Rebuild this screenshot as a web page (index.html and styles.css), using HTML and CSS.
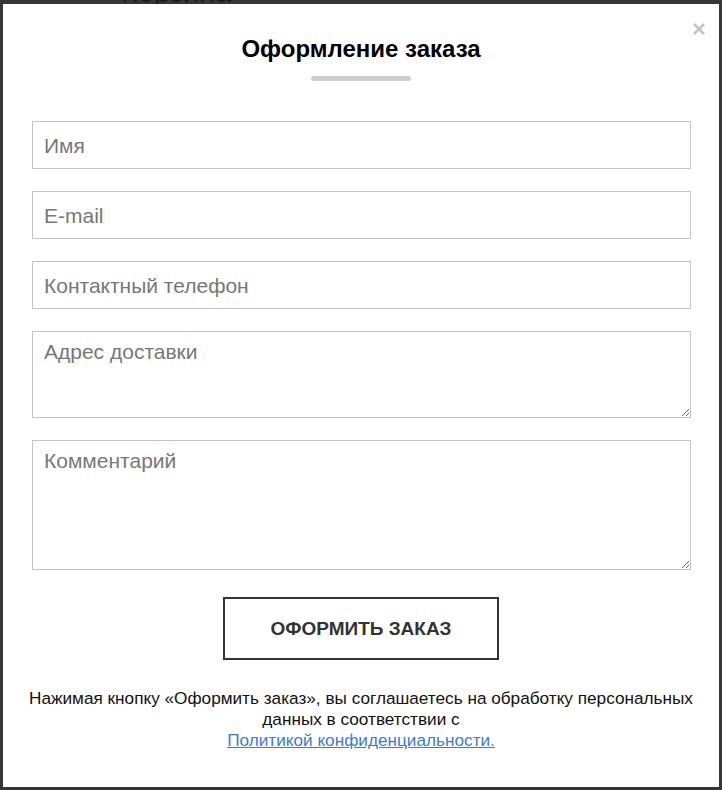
FILE: index.html
```html
<!DOCTYPE html>
<html lang="ru">
<head>
<meta charset="utf-8">
<title>Оформление заказа</title>
<link rel="stylesheet" href="styles.css">
</head>
<body>
<div class="page">
  <h1 class="page-title">Корзина</h1>
</div>
<div class="overlay">
  <div class="modal">
    <button class="close" type="button" aria-label="Закрыть">
      <svg width="14" height="14" viewBox="0 0 14 14"><path d="M2 2 L12 12 M12 2 L2 12" stroke="#c0c4ca" stroke-width="2.6" stroke-linecap="butt"/></svg>
    </button>
    <h2 class="modal-title">Оформление заказа</h2>
    <div class="title-bar"></div>
    <form class="form">
      <input class="field" type="text" placeholder="Имя">
      <input class="field" type="email" placeholder="E-mail">
      <input class="field" type="tel" placeholder="Контактный телефон">
      <textarea class="field area-small" placeholder="Адрес доставки"></textarea>
      <textarea class="field area-large" placeholder="Комментарий"></textarea>
      <div class="actions">
        <button class="submit" type="button">Оформить заказ</button>
      </div>
      <p class="note">Нажимая кнопку «Оформить заказ», вы соглашаетесь на обработку персональных данных в соответствии с<br><a href="#" class="note-link">Политикой конфиденциальности.</a></p>
    </form>
  </div>
</div>
</body>
</html>
```
FILE: styles.css
```css
* { box-sizing: border-box; }
html, body { margin: 0; padding: 0; }
body {
  background: #373737;
  font-family: "Liberation Sans", Arial, sans-serif;
  width: 722px;
  height: 790px;
  overflow: hidden;
  position: relative;
}
.page { padding-left: 121px; }
.page-title {
  margin: 0;
  margin-top: -24px;
  font-weight: normal;
  font-size: 29px;
  line-height: 32px;
  color: #1c1c1c;
}
.overlay {
  position: absolute;
  left: 3px;
  top: 4px;
  width: 716px;
  height: 783px;
}
.modal {
  position: relative;
  background: #fff;
  width: 100%;
  height: 100%;
  padding: 32px 29px 0 29px;
}
.close {
  position: absolute;
  right: 13px;
  top: 18px;
  border: 0;
  background: none;
  padding: 0;
  width: 14px;
  height: 14px;
  display: block;
}
.close svg { display: block; }
.modal-title {
  margin: 0;
  text-align: center;
  font-size: 24px;
  line-height: 26px;
  font-weight: bold;
  color: #000;
}
.title-bar {
  width: 100px;
  height: 5px;
  border-radius: 3px;
  background: #cdcdcd;
  margin: 14px auto 0;
}
.form {
  display: flex;
  flex-direction: column;
  gap: 22px;
  margin-top: 40px;
}
.field {
  display: block;
  width: calc(100% + 1px);
  height: 48px;
  border: 1px solid #c4c4c4;
  border-radius: 0;
  padding: 1px 11px 0;
  font-family: "Liberation Sans", Arial, sans-serif;
  font-size: 21px;
  color: #333;
  background: #fff;
  outline: none;
}
.field::placeholder { color: #777; opacity: 1; }
textarea.field {
  padding: 8px 11px;
  resize: vertical;
  line-height: 24px;
}
.area-small { height: 87px; }
.area-large { height: 130px; }
.actions {
  display: flex;
  justify-content: center;
  margin-top: 5px;
}
.submit {
  width: 276px;
  height: 63px;
  border: 2px solid #333;
  background: #fff;
  color: #333;
  font-family: "Liberation Sans", Arial, sans-serif;
  font-weight: bold;
  font-size: 19px;
  text-transform: uppercase;
  letter-spacing: 0;
}
.note {
  margin: 6px -10px 0;
  text-align: center;
  font-size: 17.2px;
  line-height: 21px;
  color: #111;
}
.note-link {
  color: #3a7bd5;
  text-decoration: underline;
}
```
